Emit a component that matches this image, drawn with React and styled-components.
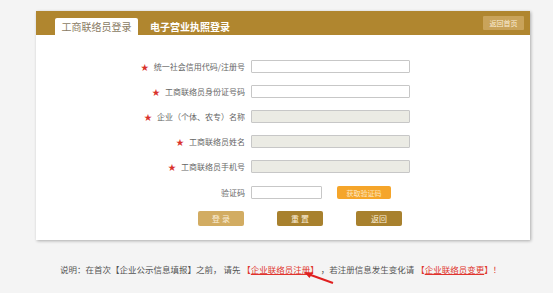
import React from "react";
import styled, { createGlobalStyle } from "styled-components";

const GlobalStyle = createGlobalStyle`
  html, body {
    margin: 0;
    padding: 0;
    background: #f4f4f4;
    font-family: "Noto Sans CJK SC", "Noto Sans", sans-serif;
  }
`;

const fields = [
  { label: "统一社会信用代码/注册号", disabled: false },
  { label: "工商联络员身份证号码", disabled: false },
  { label: "企业（个体、农专）名称", disabled: true },
  { label: "工商联络员姓名", disabled: true },
  { label: "工商联络员手机号", disabled: true },
];

const App = () => {
  return (
    <>
      <GlobalStyle />
      <Page>
        <Card>
          <Header>
            <Tab active>工商联络员登录</Tab>
            <Tab>电子营业执照登录</Tab>
            <HomeButton>返回首页</HomeButton>
          </Header>
          <Form>
            {fields.map((f) => (
              <React.Fragment key={f.label}>
                <Label>
                  <Star>★</Star>
                  {f.label}
                </Label>
                <Input disabled={f.disabled} />
              </React.Fragment>
            ))}
            <Label>验证码</Label>
            <CaptchaRow>
              <Input small />
              <CaptchaButton>获取验证码</CaptchaButton>
            </CaptchaRow>
          </Form>
          <Actions>
            <ActionButton light>登 录</ActionButton>
            <ActionButton>重 置</ActionButton>
            <ActionButton>返回</ActionButton>
          </Actions>
        </Card>
        <NoteWrap>
          <Note>
            说明：在首次【企业公示信息填报】之前， 请先 <Red>【<Link>企业联络员注册</Link>】</Red> ，若注册信息发生变化请 <Red>【<Link>企业联络员变更</Link>】！</Red>
          </Note>
          <Arrow width="32" height="14" viewBox="0 0 32 14">
            <path d="M30 12 L5 3" stroke="#e02020" strokeWidth="2" fill="none" />
            <path d="M1 1 L10 1.5 L6.5 7 Z" fill="#e02020" />
          </Arrow>
        </NoteWrap>
      </Page>
    </>
  );
};

const Page = styled.div`
  padding: 11px 23px 20px 36px;
`;

const Card = styled.div`
  width: 494px;
  background: #fff;
  box-shadow: 1px 1px 3px rgba(0, 0, 0, 0.3);
`;

const Header = styled.div`
  height: 24px;
  background: #b0862f;
  display: flex;
  align-items: flex-end;
  padding: 0 6px 0 19px;
  box-sizing: border-box;
`;

const Tab = styled.div`
  height: 17px;
  width: ${(p) => (p.active ? "83px" : "auto")};
  padding: ${(p) => (p.active ? "0" : "0 12px")};
  background: ${(p) => (p.active ? "#fff" : "transparent")};
  color: ${(p) => (p.active ? "#8a7b63" : "#fff")};
  font-size: 10px;
  font-weight: ${(p) => (p.active ? "normal" : "bold")};
  display: flex;
  align-items: center;
  justify-content: center;
  border-radius: 2px 2px 0 0;
`;

const HomeButton = styled.div`
  margin-left: auto;
  align-self: flex-start;
  margin-top: 5px;
  width: 41px;
  height: 14px;
  background: #c9a35a;
  color: #fbeed5;
  font-size: 7px;
  display: flex;
  align-items: center;
  justify-content: center;
  border-radius: 1px;
`;

const Form = styled.div`
  display: grid;
  grid-template-columns: 209px 159px;
  column-gap: 6px;
  row-gap: 12px;
  padding-top: 25px;
  align-items: center;
`;

const Label = styled.div`
  text-align: right;
  font-size: 8px;
  color: #666;
  white-space: nowrap;
  line-height: 13px;
`;

const Star = styled.span`
  color: #d9322b;
  font-size: 8px;
  margin-right: 5px;
`;

const Input = styled.input`
  box-sizing: border-box;
  width: ${(p) => (p.small ? "71px" : "159px")};
  height: 13px;
  margin: 0;
  padding: 0;
  border: 1px solid #c7c7c7;
  background: ${(p) => (p.disabled ? "#ebebe4" : "#fff")};
  border-radius: 1px;
`;

const CaptchaRow = styled.div`
  display: flex;
  align-items: center;
  gap: 15px;
  margin-top: 1px;
`;

const CaptchaButton = styled.div`
  width: 54px;
  height: 13px;
  background: #f5a52a;
  color: #fde7c2;
  font-size: 7px;
  display: flex;
  align-items: center;
  justify-content: center;
  border-radius: 2px;
`;

const Actions = styled.div`
  display: flex;
  gap: 33px;
  padding: 12px 0 14px 162px;
`;

const ActionButton = styled.div`
  width: 46px;
  height: 15px;
  background: ${(p) => (p.light ? "#d2ac62" : "#a8812e")};
  color: #fbefd9;
  font-size: 8px;
  display: flex;
  align-items: center;
  justify-content: center;
  border-radius: 2px;
`;

const NoteWrap = styled.div`
  position: relative;
  margin: 23px 0 0 24px;
`;

const Note = styled.div`
  font-size: 8.5px;
  color: #555;
  line-height: 12px;
  white-space: nowrap;
`;

const Red = styled.span`
  color: #e0342d;
`;

const Link = styled.span`
  text-decoration: underline;
`;

const Arrow = styled.svg`
  display: block;
  position: absolute;
  left: 243px;
  top: 8px;
  z-index: 2;
`;

export default App;
